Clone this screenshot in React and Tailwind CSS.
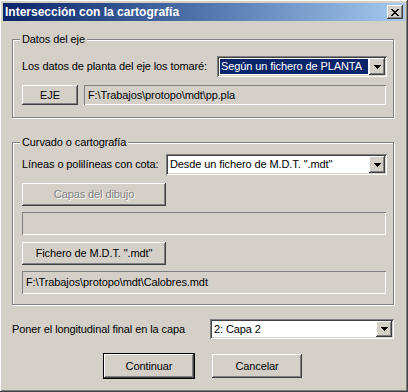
import React from 'react';

const raised = 'shadow-[inset_-1px_-1px_#404040,inset_1px_1px_#ffffff,inset_-2px_-2px_#808080,inset_2px_2px_#d4d0c8]';
const sunken = 'shadow-[inset_1px_1px_#808080,inset_-1px_-1px_#ffffff,inset_2px_2px_#404040,inset_-2px_-2px_#d4d0c8]';
const flat = 'shadow-[inset_1px_1px_#808080,inset_-1px_-1px_#ffffff]';

function Arrow() {
    return (
        <svg width="7" height="4" viewBox="0 0 7 4" shapeRendering="crispEdges">
            <path d="M0 0h7v1h-1v1h-1v1h-1v1h-1v-1h-1v-1h-1v-1h-1z" fill="#000" />
        </svg>
    );
}

function Select({ value, width, height, selected }) {
    return (
        <div className={`flex items-stretch bg-white p-[2px] ${sunken}`} style={{ width, height }}>
            <div className="flex flex-1 items-center p-[1px]">
                <div className={`flex h-full flex-1 items-center pl-[1px] ${selected ? 'bg-[#0a246a] text-white' : 'text-black'}`}>
                    {value}
                </div>
            </div>
            <div className={`flex w-[16px] items-center justify-center bg-[#d4d0c8] ${raised}`}>
                <Arrow />
            </div>
        </div>
    );
}

function Button({ children, width, height, disabled, isDefault }) {
    const inner = (
        <div
            className={`flex items-center justify-center bg-[#d4d0c8] ${raised} ${disabled ? 'text-[#808080] [text-shadow:1px_1px_0_#ffffff]' : 'text-black'}`}
            style={{ width, height }}
        >
            {children}
        </div>
    );
    if (isDefault) return <div className="border border-black">{inner}</div>;
    return inner;
}

function Field({ value, width, height }) {
    return (
        <div className={`flex items-center bg-[#d4d0c8] pl-[4px] ${flat}`} style={{ width, height }}>
            {value}
        </div>
    );
}

function Group({ title, height, children }) {
    return (
        <div className="relative w-[382px] border border-[#808080] shadow-[1px_1px_0_#ffffff,inset_1px_1px_0_#ffffff]" style={{ height }}>
            <span className="absolute left-[7px] top-[-8px] bg-[#d4d0c8] px-[2px] leading-[14px]">{title}</span>
            {children}
        </div>
    );
}

export default function App() {
    return (
        <div className="h-[392px] w-[408px] bg-[#d4d0c8] p-[3px] text-[11px] tracking-[-0.1px] text-black shadow-[inset_-1px_-1px_#404040,inset_1px_1px_#ffffff,inset_-2px_-2px_#808080,inset_2px_2px_#d4d0c8] [font-family:'Liberation_Sans',Arial,sans-serif]">
            <div className="flex h-[18px] items-center justify-between bg-gradient-to-r from-[#0a246a] to-[#a6caf0] pl-[2px] pr-[2px]">
                <span className="text-[12px] font-bold tracking-normal text-white">Intersección con la cartografía</span>
                <div className={`flex h-[14px] w-[16px] items-center justify-center bg-[#d4d0c8] ${raised}`}>
                    <svg width="8" height="7" viewBox="0 0 8 7" shapeRendering="crispEdges">
                        <path d="M0 0h2v1h1v1h2v-1h1v-1h2v1h-1v1h-1v1h-1v1h1v1h1v1h1v1h-2v-1h-1v-1h-2v1h-1v1h-2v-1h1v-1h1v-1h1v-1h-1v-1h-1v-1h-1z" fill="#000" />
                    </svg>
                </div>
            </div>

            <div className="flex flex-col pl-[9px]">
                <div className="mt-[18px]">
                    <Group title="Datos del eje" height={79}>
                        <div className="flex flex-col pl-[9px] pt-[16px]">
                            <div className="flex h-[21px] items-center justify-between pr-[6px]">
                                <span>Los datos de planta del eje los tomaré:</span>
                                <Select value="Según un fichero de PLANTA" width={170} height={21} selected />
                            </div>
                            <div className="mt-[8px] flex items-center gap-[6px]">
                                <Button width={56} height={20}>EJE</Button>
                                <Field value={'F:\\Trabajos\\protopo\\mdt\\pp.pla'} width={302} height={20} />
                            </div>
                        </div>
                    </Group>
                </div>

                <div className="mt-[24px]">
                    <Group title="Curvado o cartografía" height={163}>
                        <div className="flex flex-col pl-[9px] pt-[11px]">
                            <div className="flex h-[21px] items-center justify-between pr-[6px]">
                                <span>Líneas o polilíneas con cota:</span>
                                <Select value={'Desde un fichero de M.D.T. ".mdt"'} width={221} height={21} />
                            </div>
                            <div className="mt-[8px]">
                                <Button width={144} height={23} disabled>Capas del dibujo</Button>
                            </div>
                            <div className="mt-[6px]">
                                <Field value="" width={364} height={23} />
                            </div>
                            <div className="mt-[7px]">
                                <Button width={144} height={23}>Fichero de M.D.T. ".mdt"</Button>
                            </div>
                            <div className="mt-[6px]">
                                <Field value={'F:\\Trabajos\\protopo\\mdt\\Calobres.mdt'} width={364} height={23} />
                            </div>
                        </div>
                    </Group>
                </div>

                <div className="mt-[14px] flex h-[20px] w-[382px] items-center justify-between">
                    <span>Poner el longitudinal final en la capa</span>
                    <Select value="2: Capa 2" width={184} height={20} />
                </div>

                <div className="mt-[14px] flex w-[382px] items-center gap-[17px] pl-[91px]">
                    <Button width={90} height={24} isDefault>Continuar</Button>
                    <Button width={90} height={24}>Cancelar</Button>
                </div>
            </div>
        </div>
    );
}
